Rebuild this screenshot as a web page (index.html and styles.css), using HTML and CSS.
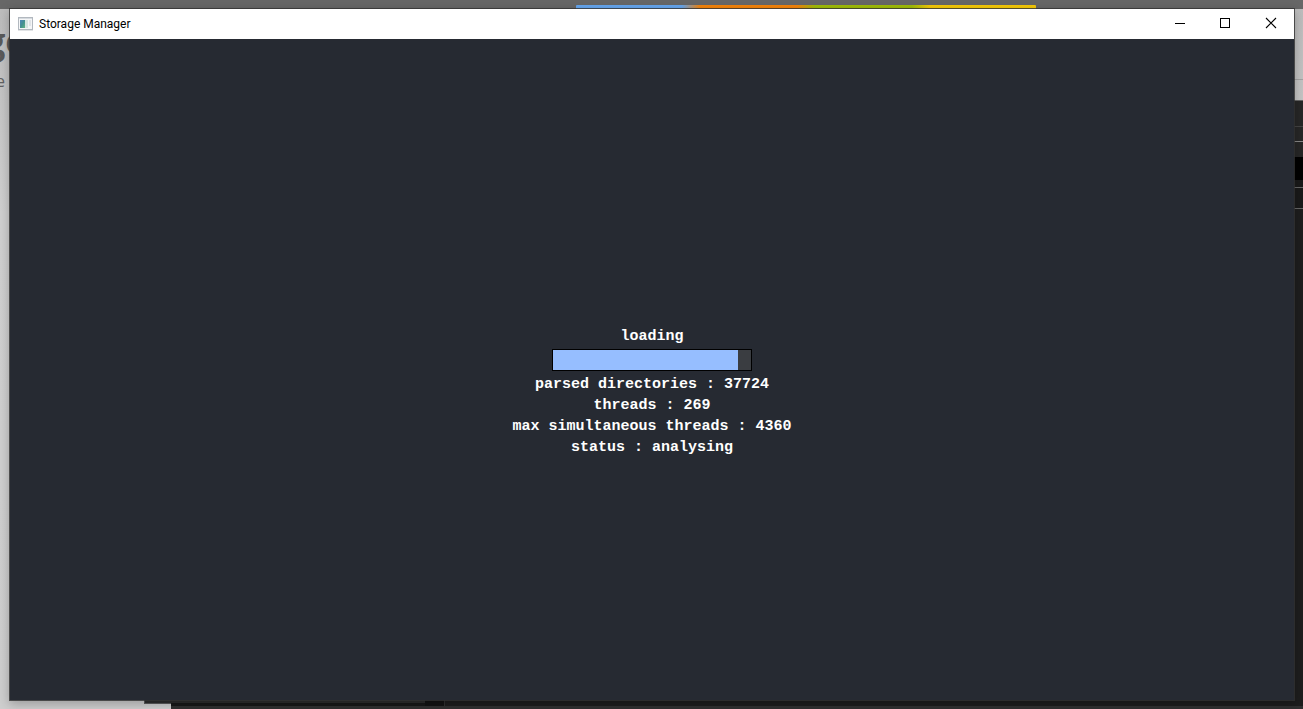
FILE: index.html
```html
<!DOCTYPE html>
<html lang="en">
<head>
<meta charset="utf-8">
<title>Storage Manager</title>
<link rel="stylesheet" href="styles.css">
</head>
<body>
<div class="desktop" aria-hidden="true">
  <div class="back-header"><div class="stripe"></div></div>
  <div class="back-title">ge</div>
  <div class="back-sub">e</div>
  <div class="back-rule"></div>
  <div class="dark-side">
    <div class="side-row row-top"></div>
    <div class="side-row row-upper"></div>
    <div class="side-row row-black"></div>
    <div class="side-row row-mid"></div>
    <div class="side-row row-rest"></div>
  </div>
  <div class="dark-lip"></div>
  <div class="dark-bottom"><div class="dark-tab"></div></div>
</div>
<main class="window">
  <header class="titlebar">
    <svg class="app-icon" viewBox="0 0 16 14" aria-hidden="true">
      <defs>
        <linearGradient id="pane" x1="0" y1="0" x2="1" y2="1">
          <stop offset="0" stop-color="#4f86bb"/>
          <stop offset="0.5" stop-color="#438f91"/>
          <stop offset="1" stop-color="#62b680"/>
        </linearGradient>
      </defs>
      <path d="M0 0h15v13H0z" fill="#b2b8bf"/>
      <path d="M1 2h13v10H1z" fill="#f5f6f7"/>
      <path d="M1 1h13v1H1z" fill="#d5dadf"/>
      <path d="M2 3h5v8H2z" fill="url(#pane)"/>
      <path d="M7 3h3v8H7z" fill="#d5e5e1"/>
      <path d="M11 3h2v6h-2z" fill="#e1e4e8"/>
      <path d="M0 13h15v1H0z" fill="#e1e3e5"/>
    </svg>
    <h1 class="title">Storage Manager</h1>
    <div class="controls">
      <button class="control" type="button" aria-label="Minimize">
        <svg viewBox="0 0 10 10" shape-rendering="crispEdges"><path d="M1 4h10v1H1z"/></svg>
      </button>
      <button class="control" type="button" aria-label="Maximize">
        <svg viewBox="0 0 10 10" shape-rendering="crispEdges"><path d="M0 -1h10v10H0zM1 0v8h8V0z" fill-rule="evenodd"/></svg>
      </button>
      <button class="control" type="button" aria-label="Close">
        <svg viewBox="0 0 10 10"><path d="M0 -1l10 10M10 -1L0 9" stroke="#000" stroke-width="1.1"/></svg>
      </button>
    </div>
  </header>
  <section class="content">
    <label class="line" for="scan">loading</label>
    <progress class="bar" id="scan" value="187" max="200"></progress>
    <p class="line">parsed directories : 37724</p>
    <p class="line">threads : 269</p>
    <p class="line">max simultaneous threads : 4360</p>
    <p class="line">status : analysing</p>
  </section>
</main>
</body>
</html>
```
FILE: styles.css
```css
* { box-sizing: border-box; }

body {
  margin: 0;
  height: 100vh;
  padding: 8px 8px 8px 9px;
  display: flex;
  overflow: hidden;
  background: #c4c4c4;
}

/* Windows lying behind the application */
.desktop {
  position: absolute;
  inset: 0;
  overflow: hidden;
  background: linear-gradient(#bcbcbc, #d0d0d0 30%, #cecece);
}

.back-header {
  position: absolute;
  inset: 0 0 auto 0;
  height: 9px;
  background: #676767;
}

.stripe {
  position: absolute;
  top: 5px;
  left: 576px;
  width: 460px;
  height: 4px;
  border-radius: 1px 1px 0 0;
  background: linear-gradient(90deg, #66a6ee 23%, #f5840a 27%, #f5840a 48%, #a0bd08 52%, #a0bd08 73%, #f6ca08 77%);
}

.back-title {
  position: absolute;
  top: 18px;
  left: -15px;
  font: bold 36px/46px "Open Sans", sans-serif;
  color: #5a5a5a;
}

.back-sub {
  position: absolute;
  top: 70px;
  left: -4px;
  font: 16px/22px "Open Sans", sans-serif;
  color: #626262;
}

.back-rule {
  position: absolute;
  top: 79px;
  right: 0;
  width: 12px;
  height: 1px;
  background: #a4a4a4;
}

.dark-side {
  position: absolute;
  top: 100px;
  right: 0;
  bottom: 0;
  width: 12px;
  display: flex;
  flex-direction: column;
  border-top: 1px solid #666;
  background: #1e1e1e;
}

.row-top { height: 26px; background: #272727; border-bottom: 1px solid #444; }
.row-upper { height: 30px; background: linear-gradient(#272727 14px, #888 14px, #888 15px, #272727 15px); }
.row-black { height: 23px; background: #000; }
.row-mid { height: 8px; background: #1a1a1a; border-bottom: 1px solid #666; }
.row-rest { height: 21px; background: #1a1a1a; border-bottom: 1px solid #666; }

.dark-lip {
  position: absolute;
  left: 144px;
  bottom: 5px;
  width: 40px;
  height: 10px;
  background: #2d2d2d;
  border: 1px solid #5a5a5a;
}

.dark-bottom {
  position: absolute;
  left: 171px;
  right: 0;
  bottom: 0;
  height: 9px;
  border-bottom: 3px solid #303030;
  background: linear-gradient(#2d2d2d 3px, #181818 3px);
}

.dark-tab {
  position: absolute;
  top: 0;
  left: 254px;
  right: 0;
  height: 6px;
  background: linear-gradient(90deg, #131313 19px, #303030 19px, #303030 20px, #1d1d1d 20px);
}

/* Application window */
.window {
  position: relative;
  flex: 1;
  display: flex;
  flex-direction: column;
  border: 1px solid rgba(50, 50, 50, 0.8);
  background: #262a32;
  background-clip: padding-box;
  box-shadow: 0 3px 10px rgba(0, 0, 0, 0.25);
}

.titlebar {
  display: flex;
  align-items: center;
  height: 30px;
  padding-left: 8px;
  background: #fff;
}

.app-icon { width: 16px; height: 14px; }

.title {
  flex: 1;
  margin: 0 0 0 5px;
  font: 12px/16px Roboto, "Open Sans", sans-serif;
  color: #000;
}

.controls { display: flex; height: 100%; }

.control {
  display: flex;
  align-items: center;
  justify-content: center;
  width: 46px;
  padding: 0;
  border: 0;
  background: transparent;
}

.control svg { width: 10px; height: 10px; overflow: visible; }

.content {
  flex: 1;
  display: flex;
  flex-direction: column;
  align-items: center;
  justify-content: center;
  padding-top: 44px;
}

.line {
  margin: 0;
  font: bold 15px/21px "Liberation Mono", monospace;
  color: #fff;
}

.bar {
  appearance: none;
  width: 200px;
  height: 22px;
  margin: 2px 0 3px;
  border: 1px solid #000;
  background: #3a3d41;
}

.bar::-webkit-progress-bar { background: #3a3d41; }
.bar::-webkit-progress-value { background: #96beff; }
```
